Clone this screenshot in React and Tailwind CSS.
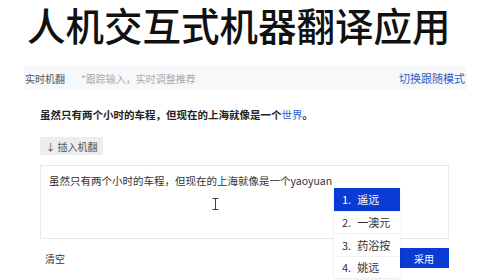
import React from 'react';

const font = { fontFamily: '"Noto Sans CJK SC", "Noto Sans", sans-serif' };

const options = ['遥远', '一澳元', '药浴按', '姚远'];

function Suggestions() {
  return (
    <ul className="absolute left-[334px] top-[188px] w-[66px] bg-white shadow-[0_1px_3px_rgba(0,0,0,0.1)]">
      {options.map((o, i) => (
        <li
          key={o}
          className={`flex h-[22.5px] items-center gap-[6px] pl-[8px] text-[11px] ${
            i === 0 ? 'bg-[#0a3bd2] text-white' : 'border-t border-[#f0f0f0] text-[#333]'
          }`}
        >
          <span>{i + 1}.</span>
          <span>{o}</span>
        </li>
      ))}
    </ul>
  );
}

function IBeam() {
  return (
    <svg className="absolute left-[212px] top-[198px]" width="7" height="12" viewBox="0 0 7 12">
      <path d="M0.5 0.5h6M3.5 0.5v11M0.5 11.5h6" stroke="#444" strokeWidth="1" fill="none" />
    </svg>
  );
}

export default function App() {
  return (
    <div className="relative h-[280px] w-[496px] bg-white" style={font}>
      <h1 className="w-fit whitespace-nowrap pl-[27px] pr-[4px] text-[38.5px] leading-[48px] font-medium text-[#111]">
        人机交互式机器翻译应用
      </h1>

      <div className="ml-[24px] mt-[18px] w-[443px] bg-[#f7f8fa]">
        <div className="flex h-[24px] items-center justify-between pl-[1px] pr-[2px]">
          <div className="flex items-center gap-[16px]">
            <span className="text-[10px] text-[#555]">实时机翻</span>
            <span className="text-[10px] text-[#aaa]">*跟踪输入，实时调整推荐</span>
          </div>
          <span className="text-[11px] text-[#2f5fc9]">切换跟随模式</span>
        </div>

        <div className="bg-white pb-[12px] pl-[16px] pr-[18px] pt-[17px]">
          <p className="text-[10.5px] font-bold leading-[16px] text-[#222]">
            虽然只有两个小时的车程，但现在的上海就像是一个<span className="font-normal text-[#2f5fc9]">世界</span>。
          </p>

          <button className="mt-[14px] flex h-[18px] w-[63px] items-center justify-center bg-[#ededed] text-[10px] text-[#555]">
            ↓ 插入机翻
          </button>

          <div className="mt-[10px] h-[74px] border border-[#e8e9ec] pl-[8px] pt-[7px] text-[10.5px] leading-[16px] text-[#333]">
            虽然只有两个小时的车程，但现在的上海就像是一个yaoyuan
          </div>

          <div className="mt-[9px] flex h-[20px] items-center justify-between">
            <span className="pl-[5px] text-[10px] text-[#333]">清空</span>
            <button className="h-[20px] w-[50px] bg-[#0a3bd2] text-[10px] text-white">采用</button>
          </div>
        </div>
      </div>

      <IBeam />
      <Suggestions />
    </div>
  );
}
